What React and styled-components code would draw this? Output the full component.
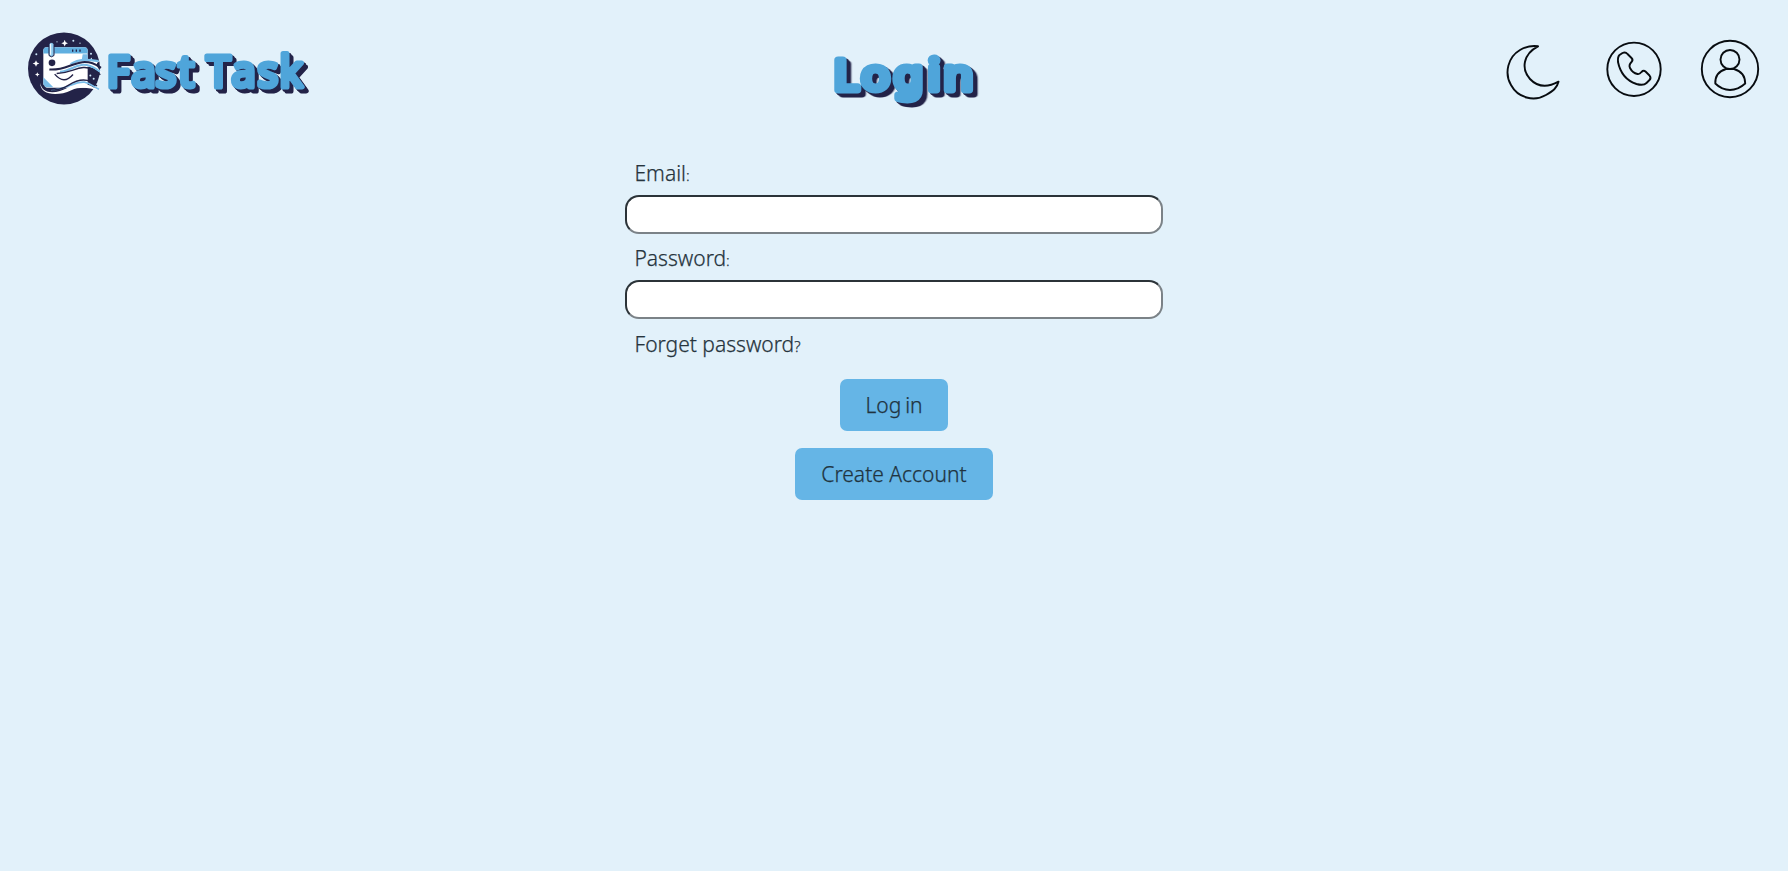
import React from "react";
import styled, { createGlobalStyle } from "styled-components";

const GlobalStyle = createGlobalStyle`
  * { box-sizing: border-box; }
  body {
    margin: 0;
    background: #e2f1fa;
    color: #26343d;
    font-family: "Noto Sans", "Liberation Sans", sans-serif;
  }
`;

const Page = styled.div`
  min-height: 871px;
`;

const Header = styled.header`
  display: grid;
  grid-template-columns: 1fr auto 1fr;
  height: 130px;
  padding: 30px 28px 0;
`;

const Brand = styled.a`
  display: flex;
  align-items: flex-start;
`;

const Heading = styled.h1`
  margin: 10px 0 0;
  line-height: 0;
`;

const Nav = styled.nav`
  display: flex;
  justify-content: flex-end;
  align-items: flex-start;
  gap: 36px;
  padding-top: 8px;
`;

const Lettering = styled.svg`
  display: block;
  overflow: visible;
  text {
    font-family: "Noto Sans", sans-serif;
    font-weight: 400;
    fill: #4fa5da;
    stroke: #4fa5da;
    stroke-width: ${(p) => p.$weight}px;
    stroke-linejoin: round;
    stroke-linecap: round;
    filter: drop-shadow(2px 2px 0 #232348) drop-shadow(2px 2.5px 0 #232348);
  }
`;

const LineIcon = styled.svg`
  display: block;
  fill: none;
  stroke: #080c10;
  stroke-width: 1.9;
  stroke-linejoin: round;
  stroke-linecap: round;
`;

const Form = styled.form`
  display: flex;
  flex-direction: column;
  align-items: center;
  width: 538px;
  margin: 0 auto;
  padding-top: 31px;
`;

const Field = styled.div`
  width: 100%;
  height: 85.3px;
`;

const Label = styled.label`
  display: block;
  height: 33.5px;
  padding-left: 9.5px;
  font-size: 21px;
  font-weight: 300;
  line-height: 24px;
  -webkit-text-stroke: 0.25px currentColor;
`;

const Mark = styled.span`
  font-size: 15px;
`;

const Input = styled.input`
  display: block;
  width: 100%;
  height: 39.5px;
  border: 2px solid;
  border-color: #2b3338 #7b8287 #7b8287 #2b3338;
  border-radius: 14px;
  background: #fff;
`;

const Forgot = styled(Label).attrs({ as: "a" })`
  width: 100%;
  height: 47.4px;
`;

const Button = styled.button`
  width: ${(p) => p.$width}px;
  height: 52px;
  margin-bottom: 17px;
  padding: 0;
  border: 0;
  border-radius: 7px;
  background: #65b5e6;
  color: #20333f;
  font: 300 21px/52px "Noto Sans", "Liberation Sans", sans-serif;
  word-spacing: ${(p) => p.$wordGap || 0}px;
  -webkit-text-stroke: 0.25px currentColor;
`;

function Emblem() {
  return (
    <svg width="76" height="78" viewBox="24 15.5 228 234" fill="none" aria-hidden="true">
      <circle cx="132" cy="131" r="108" fill="#232348" />
      <path d="M70 77Q70 67 80 67H193Q203 67 203 77V177Q203 189 192 189H82Q70 189 70 178Z" fill="#fff" />
      <path d="M70 86V77Q70 67 80 67H193Q203 67 203 77V86Z" fill="#60afe0" />
      <path d="M188 88H203V123L184 113ZM70 157L100 187H80Q70 186 70 176Z" fill="#79bce8" />
      <path d="M87 92V58Q87 53 94 53Q102 53 102 58V92Q94 100 87 92Z" fill="#8dc9ed" stroke="#232348" strokeWidth="3" />
      <path d="M92 57V90" stroke="#fff" strokeWidth="3" />
      <path d="M158 74V81M169 74V81M180 74V81" stroke="#232348" strokeWidth="4" />
      <circle cx="96" cy="114" r="10" fill="#232348" />
      <path d="M88 129C128 136 155 106 192 104C218 103 232 108 240 110C222 112 232 130 247 145C224 134 212 122 188 126C149 131 134 145 88 135Z" fill="#fff" />
      <path d="M152 118C178 101 203 104 236 109" stroke="#79bce8" strokeWidth="7" />
      <path d="M88 134C130 138 153 116 187 112C215 110 228 120 243 129" stroke="#232348" strokeWidth="6" />
      <path d="M120 141C145 140 157 124 189 120C214 119 226 132 240 140" stroke="#79bce8" strokeWidth="6" />
      <path d="M110 146C150 144 163 130 190 128C214 127 226 137 241 150" stroke="#232348" strokeWidth="4" />
      <path d="M104 148Q132 181 159 149" stroke="#232348" strokeWidth="4" />
      <path d="M61 174C65 211 111 207 143 189C180 168 208 176 235 197C205 188 180 185 154 196C112 216 59 211 61 174Z" fill="#fff" />
      <path d="M93 196C137 195 163 169 193 172C213 175 223 188 237 193" stroke="#79bce8" strokeWidth="5" />
      <path d="M68 180C82 204 120 197 146 181C174 163 194 162 212 170L231 183" stroke="#232348" strokeWidth="4" />
      <path d="M134 45L137 52L144 55L137 58L134 65L131 58L124 55L131 52ZM48 106L51 113L58 116L51 119L48 126L45 119L38 116L45 113ZM52 142L54 147L59 149L54 151L52 156L50 151L45 149L50 147Z" fill="#fff" />
      <g fill="#cce8fb">
        <circle cx="160" cy="48" r="3" /><circle cx="111" cy="51" r="2" /><circle cx="180" cy="55" r="2" />
        <circle cx="49" cy="88" r="3" /><circle cx="213" cy="87" r="3" />
        <circle cx="214" cy="101" r="2" /><circle cx="211" cy="152" r="3" /><circle cx="221" cy="162" r="3" />
      </g>
    </svg>
  );
}

export default function App() {
  return (
    <Page>
      <GlobalStyle />
      <Header>
        <Brand>
          <Emblem />
          <Lettering width="208" height="70" $weight={5.2}>
            <text x="2.8 27.500 51.500 74.500 90 102.500 127.500 153.500 175.500" y="57" fontSize="43">Fast Task</text>
          </Lettering>
        </Brand>
        <Heading>
          <Lettering width="120" height="70" $weight={7}>
            <text transform="scale(1.15 1)" x="-0.2 23.700 52 81.700 95.400" y="49.700" fontSize="41">Login</text>
          </Lettering>
        </Heading>
        <Nav>
          <LineIcon width="66" height="66" viewBox="1502 38 66 66">
            <path d="M1538 46.300C1532 45.500 1526 46.500 1520 50C1508 57 1504 73 1511 85C1518 98 1534 102 1546 95C1553 91 1557 88 1558.500 81.700C1547 88 1537 86.500 1530 79C1521 69 1523 54 1538 46.300Z" />
          </LineIcon>
          <LineIcon width="60" height="64" viewBox="1603.500 38 60 64">
            <circle cx="1633.500" cy="69.300" r="26.700" />
            <path d="M1619 55L1622 53Q1625 51.500 1627 54L1631 58Q1633 60 1631 62Q1628 65 1629.500 68Q1632 73 1637 74Q1639 74.500 1641 72Q1643 70 1645 71.500L1649 75.500Q1651 78 1649 80L1646 83Q1643 86 1636 84Q1621 79 1617.500 62Q1617 57 1619 55Z" />
          </LineIcon>
          <LineIcon width="60" height="64" viewBox="1700 38 60 64">
            <circle cx="1730" cy="69" r="28.200" />
            <circle cx="1730" cy="59.500" r="9.500" />
            <path d="M1726 69H1734Q1745 72 1745.200 83.500Q1738 90 1730 90Q1722 90 1715.300 83.500Q1715 72 1726 69Z" />
          </LineIcon>
        </Nav>
      </Header>
      <Form>
        <Field>
          <Label htmlFor="email">Email<Mark>:</Mark></Label>
          <Input id="email" type="email" />
        </Field>
        <Field>
          <Label htmlFor="password">Password<Mark>:</Mark></Label>
          <Input id="password" type="password" />
        </Field>
        <Forgot>Forget password<Mark>?</Mark></Forgot>
        <Button type="button" $width={108} $wordGap={-1.5}>Log in</Button>
        <Button type="button" $width={198}>Create Account</Button>
      </Form>
    </Page>
  );
}
